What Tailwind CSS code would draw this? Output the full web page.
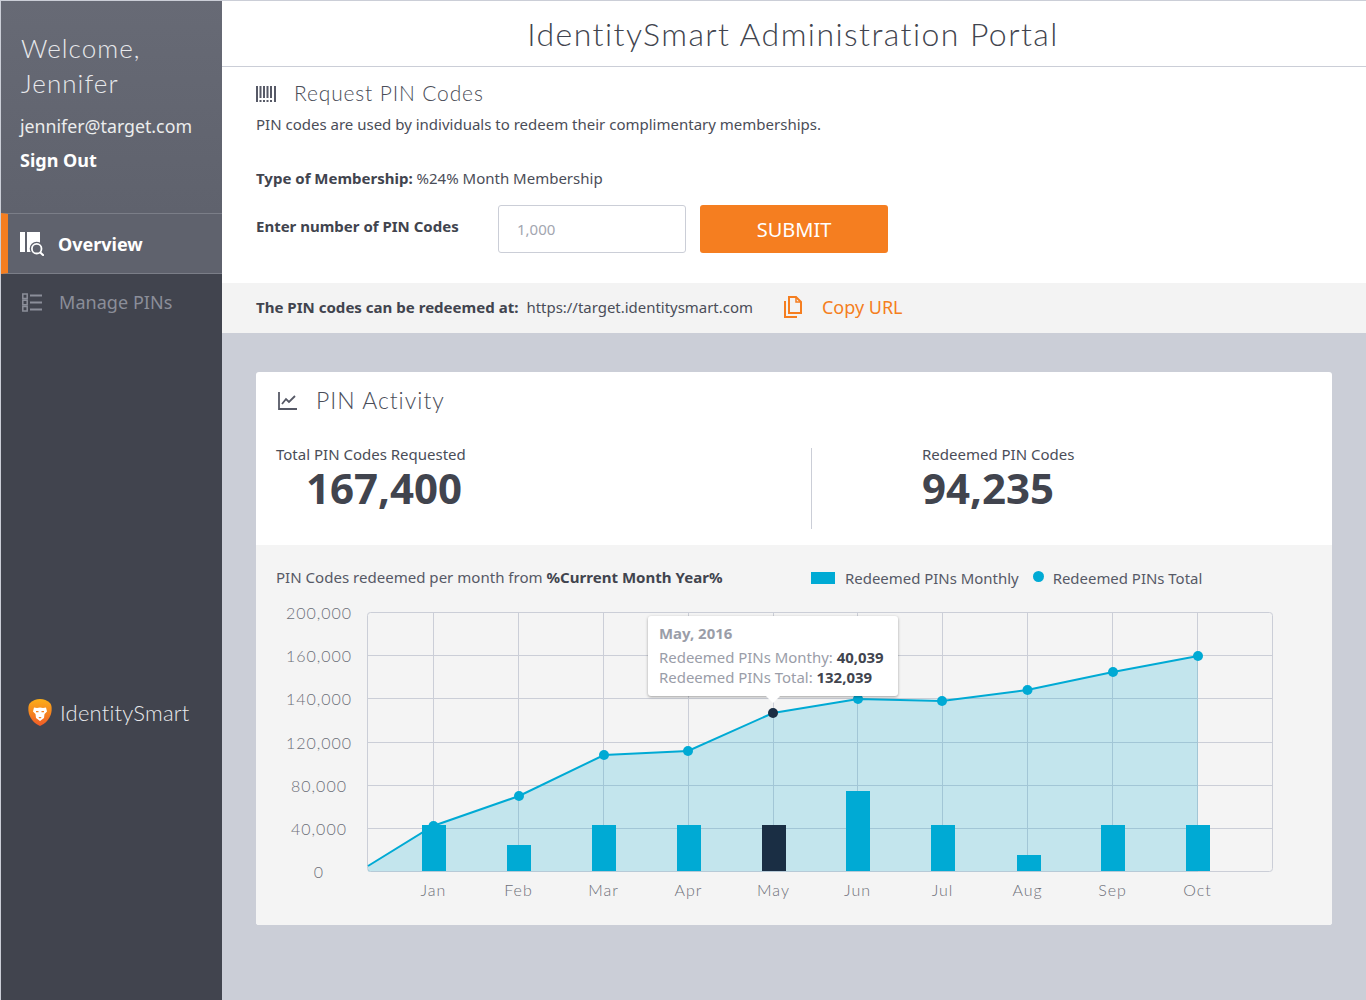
<!DOCTYPE html>
<html lang="en">
<head>
    <meta charset="UTF-8">
    <title>IdentitySmart Administration Portal</title>
    <script src="https://cdn.jsdelivr.net/npm/@tailwindcss/browser@4"></script>
</head>
<body class="bg-[#cbced7] font-['Noto_Sans',sans-serif] text-[#4a4d58]">
<div class="flex w-[1366px] h-[1000px] pt-px pl-px overflow-hidden">

    <!-- sidebar -->
    <aside class="w-[221px] shrink-0 bg-[#41444e] flex flex-col">
        <div class="h-[212px] bg-gradient-to-b from-[#676a75] to-[#5f626d] pl-5 pt-[30px] text-white">
            <h2 class="font-['Lato',sans-serif] font-light text-[26px] leading-[35px] tracking-[1.05px] text-[#e8e9ec]">Welcome,<br>Jennifer</h2>
            <p class="mt-[13px] -ml-px text-[17.75px] leading-[25px] text-[#eceded]">jennifer@target.com</p>
            <p class="mt-[9px] -ml-px text-[18px] leading-[25px] font-bold">Sign Out</p>
        </div>
        <a class="h-[61px] flex items-center bg-[#5f626d] border-y border-[#7b7e88] border-l-[7px] border-l-[#f57e20] pl-3 pt-[2px] text-white font-bold text-[18px]">
            <svg class="w-6 h-6 mr-[14px] -mt-[2px]" viewBox="0 0 24 24">
                <path fill="#fff" d="M0 0h5v20H0zM7 0h13v20H7z"/>
                <circle cx="16.700" cy="16.700" r="7" fill="#5f626d"/>
                <circle cx="16.700" cy="16.700" r="4.800" fill="none" stroke="#fff" stroke-width="1.800"/>
                <path d="M20 20.300l3.800 3.500" stroke="#fff" stroke-width="2"/>
            </svg>
            Overview
        </a>
        <a class="h-[58px] flex items-center pl-[21px] pb-[2px] text-[#8b8e99] text-[18px] tracking-[.05px]">
            <svg class="w-5 h-[19px] mr-[17px]" viewBox="0 0 20 19" fill="none" stroke="#8b8e99">
                <path stroke-width="1.500" d="M.8 1h4.400v4.400H.8zM.8 7.300h4.400v4.400H.8zM.8 13.600h4.400V18H.8z"/>
                <path stroke-width="2" d="M8 2.500h12M8 9.500h12M8 16.500h12"/>
            </svg>
            Manage PINs
        </a>
        <div class="flex-1 flex items-center pl-[27px] pt-[92px]">
            <svg class="w-[24px] h-[27px] mr-[8px]" viewBox="0 0 24 27">
                <defs><linearGradient id="lion" x1="0" y1="0" x2="0" y2="1"><stop offset="0" stop-color="#fbae17"/><stop offset=".55" stop-color="#f58220"/><stop offset="1" stop-color="#f05a28"/></linearGradient></defs>
                <path fill="url(#lion)" d="M12 0c4 0 7 1.500 10 4 2 2 2 7 1 11-1.500 5-6 10-11 12C7 25 2.500 20 1 15 0 11 0 6 2 4c3-2.500 6-4 10-4z"/>
                <path fill="#fff" d="M6 8.500c2 .5 4 .5 6 0 2 .5 4 .5 6 0l1 4-2.500 2.500-.5 4-4 3-4-3-.5-4L5 12.500z"/>
                <path fill="#f58220" d="M8 12h2.500v1.200H8zM13.500 12H16v1.200h-2.500zM10.300 18h3.400L12 19.800z"/>
            </svg>
            <span class="font-['Lato',sans-serif] font-light text-[22px] tracking-[.2px] text-[#e8e9ec]">IdentitySmart</span>
        </div>
    </aside>

    <main class="flex-1 flex flex-col">
        <header class="h-[66px] bg-white border-b border-[#cbced7] flex items-center justify-center">
            <h1 class="font-['Lato',sans-serif] font-light text-[32px] tracking-[1.43px] text-[#41444e] pr-[2px]">IdentitySmart Administration Portal</h1>
        </header>

        <!-- request form -->
        <section class="h-[216px] bg-white pl-[34px] pt-[12px]">
            <div class="flex items-center h-[28px]">
                <svg class="w-5 h-4 mr-[18px] mt-px" viewBox="0 0 20 16" fill="#565966">
                    <path d="M0 0h2v16H0zM3.500 0h2v12h-2zM7 0h2v12H7zM10.500 0h2v12h-2zM14 0h2v12h-2zM18 0h2v16h-2zM3.500 14h2v2h-2zM7 14h2v2H7zM10.500 14h2v2h-2zM14 14h2v2h-2z"/>
                </svg>
                <h2 class="font-['Lato',sans-serif] font-light text-[21px] tracking-[.85px]">Request PIN Codes</h2>
            </div>
            <p class="text-[15px] leading-[20px] mt-[7px]">PIN codes are used by individuals to redeem their complimentary memberships.</p>
            <p class="text-[15px] leading-[20px] mt-[34px]"><b class="text-[#41444e]">Type of Membership:</b> %24% Month Membership</p>
            <div class="flex mt-[17px]">
                <label class="w-[242px] text-[15px] font-bold leading-[20px] pt-[11px] text-[#41444e]">Enter number of PIN Codes</label>
                <input class="w-[188px] h-[48px] px-[18px] border border-[#cbced7] rounded-[3px] text-[15px] placeholder:text-[#a3a6b0]" placeholder="1,000">
                <button class="w-[188px] h-[48px] ml-[14px] pt-px bg-[#f57e20] rounded-[3px] text-white text-[20px]">SUBMIT</button>
            </div>
        </section>
        <div class="h-[50px] bg-[#f3f3f3] pl-[34px] pb-[2px] flex items-center text-[14.95px]">
            <b class="text-[15.05px] text-[#41444e]">The PIN codes can be redeemed at:</b>
            <span class="ml-2">https://target.identitysmart.com</span>
            <svg class="w-[18px] h-[22px] ml-[31px]" viewBox="0 0 18 22" fill="none" stroke="#f57e20" stroke-width="2">
                <path d="M1 5v16h12"/>
                <path d="M5 1h7l5 5v11H5z"/>
                <path d="M12 1v5h5" stroke-width="1.500"/>
            </svg>
            <span class="ml-[20px] text-[18px] text-[#f57e20]">Copy URL</span>
        </div>

        <!-- activity card -->
        <div class="flex-1 px-[34px] pt-[39px]">
            <section class="h-[553px] rounded-[3px] overflow-hidden bg-white flex flex-col">
                <div class="h-[173px] relative">
                    <div class="flex items-center pl-[22px] pt-[13px]">
                        <svg class="w-[19px] h-[18px] mr-[19px] mt-[2px]" viewBox="0 0 19 18" fill="none" stroke="#565966" stroke-width="1.800">
                            <path d="M1 0v17h18"/>
                            <path d="M4 12l4-5 3 3 6-6"/>
                        </svg>
                        <h2 class="font-['Lato',sans-serif] font-light text-[23px] leading-[30px] tracking-[1px]">PIN Activity</h2>
                    </div>
                    <div class="flex mt-[33px]">
                        <div class="w-[556px] h-[81px] border-r border-[#cbced7] pl-5">
                            <p class="text-[15px] leading-[12px]">Total PIN Codes Requested</p>
                            <p class="pl-[30px] mt-[3px] text-[42px] leading-[50px] font-bold text-[#41444e]">167,400</p>
                        </div>
                        <div class="pl-[110px]">
                            <p class="text-[15px] leading-[12px]">Redeemed PIN Codes</p>
                            <p class="mt-[3px] text-[42px] leading-[50px] font-bold text-[#41444e]">94,235</p>
                        </div>
                    </div>
                </div>

                <div class="flex-1 bg-[#f4f4f4] relative">
                    <div class="flex items-center h-[24px] mt-[21px] px-5 text-[14.95px] text-[#565966]">
                        <p class="w-[535px] mb-[2px] text-[15.05px]">PIN Codes redeemed per month from <b class="text-[#41444e]">%Current Month Year%</b></p>
                        <span class="w-6 h-3 bg-[#00aad4] mr-[10px]"></span>
                        <span>Redeemed PINs Monthly</span>
                        <span class="w-[11px] h-[11px] rounded-full bg-[#00aad4] ml-[14px] mr-[9px] mb-[3px]"></span>
                        <span>Redeemed PINs Total</span>
                    </div>

                    <svg class="block w-[1036px] h-[310px] mt-[10px] ml-5" viewBox="276 600 1036 310">
                        <g stroke="#cbced7" fill="none">
                            <rect x="367.500" y="612.500" width="905" height="259" rx="3"/>
                            <path d="M368 655.500h905M368 698.500h905M368 742.500h905M368 785.500h905M368 828.500h905"/>
                            <path d="M433.500 612v260M518.500 612v260M603.500 612v260M688.500 612v260M773.500 612v260M857.500 612v260M942.500 612v260M1027.500 612v260M1112.500 612v260M1197.500 612v260"/>
                        </g>
                        <path fill="#00a9d4" fill-opacity=".2" d="M368 866L433 826 519 796 604 755 688 751 773 713 858 699 942 701 1027 690 1113 672 1198 656V871.500H368z"/>
                        <path fill="none" stroke="#00aad4" stroke-width="2" d="M368 866L433 826 519 796 604 755 688 751 773 713 858 699 942 701 1027 690 1113 672 1198 656"/>
                        <g fill="#00aad4">
                            <circle cx="433.500" cy="826" r="5"/><circle cx="519" cy="796" r="5"/><circle cx="604" cy="755" r="5"/><circle cx="688" cy="751" r="5"/><circle cx="858" cy="699" r="5"/><circle cx="942" cy="701" r="5"/><circle cx="1027.500" cy="690" r="5"/><circle cx="1113" cy="672" r="5"/><circle cx="1198" cy="656" r="5"/>
                            <rect x="422" y="825" width="24" height="46"/><rect x="507" y="845" width="24" height="26"/><rect x="592" y="825" width="24" height="46"/><rect x="677" y="825" width="24" height="46"/><rect x="846" y="791" width="24" height="80"/><rect x="931" y="825" width="24" height="46"/><rect x="1017" y="855" width="24" height="16"/><rect x="1101" y="825" width="24" height="46"/><rect x="1186" y="825" width="24" height="46"/>
                        </g>
                        <rect x="762" y="825" width="24" height="46" fill="#1a2e44"/>
                        <circle cx="773" cy="713" r="5" fill="#1a2e44"/>
                        <g class="font-['Lato',sans-serif] font-light text-[16px]" fill="#6d6f78" text-anchor="middle" letter-spacing="1">
                            <text x="319" y="619">200,000</text><text x="319" y="662">160,000</text><text x="319" y="705">140,000</text><text x="319" y="749">120,000</text><text x="319" y="792">80,000</text><text x="319" y="835">40,000</text><text x="319" y="878">0</text>
                            <text x="433.500" y="896">Jan</text><text x="518.500" y="896">Feb</text><text x="603.500" y="896">Mar</text><text x="688.500" y="896">Apr</text><text x="773.500" y="896">May</text><text x="857.500" y="896">Jun</text><text x="942.500" y="896">Jul</text><text x="1027.500" y="896">Aug</text><text x="1112.500" y="896">Sep</text><text x="1197.500" y="896">Oct</text>
                        </g>
                    </svg>

                    <!-- tooltip over the May point -->
                    <div class="absolute left-[392px] top-[71px] w-[250px] h-[80px] bg-white rounded-[3px] shadow-[0_1px_3px_rgba(0,0,0,.35)] pl-[11px] pt-[7px] text-[14.95px] leading-[20px] text-[#9a9da8]">
                        <p class="font-bold mb-[4px] leading-[20px]">May, 2016</p>
                        <p>Redeemed PINs Monthy: <b class="text-[#41444e]">40,039</b></p>
                        <p>Redeemed PINs Total: <b class="text-[#41444e]">132,039</b></p>
                        <span class="absolute left-[120px] -bottom-[5px] w-[10px] h-[10px] bg-white rotate-45"></span>
                    </div>
                </div>
            </section>
        </div>
    </main>
</div>
</body>
</html>
